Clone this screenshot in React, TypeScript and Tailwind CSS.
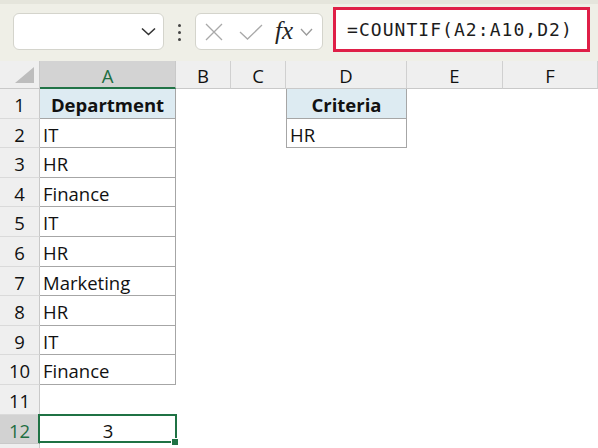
import React from "react";

const COLS = "grid grid-cols-[40px_136px_55px_55px_121px_96px_1fr]";
const FONT = { fontFamily: '"Open Sans", "Noto Sans", sans-serif' };

const aVals = ["Department", "IT", "HR", "Finance", "IT", "HR", "Marketing", "HR", "IT", "Finance"];
const dVals: Record<number, string> = { 0: "Criteria", 1: "HR" };

function rowTall(i: number) {
  const h = Math.round(89 + 29.6 * (i + 1)) - Math.round(89 + 29.6 * i);
  return h >= 30;
}

function RowHeader({ n, selected }: { n: number; selected?: boolean }) {
  return (
    <div
      className={`flex items-center justify-center border-r border-b ${
        selected ? "bg-[#d2d2d2] text-[#1e6e42] border-r-[#1f7244] border-b-[#c9c9c9]" : "bg-[#efefef] text-[#111] border-r-[#c9c9c9] border-b-[#dadada]"
      }`}
    >
      <span className="pt-[3px]">{n}</span>
    </div>
  );
}

export default function App() {
  return (
    <div className="w-[598px] h-[448px] overflow-hidden bg-white text-[18.5px] leading-[22px]" style={FONT}>
      {/* toolbar */}
      <div className="h-[61px] bg-[#efefe7] flex flex-col">
        <div className="h-[4px] bg-[#e5e5dc]" />
        <div className="flex items-start pl-[13px]">
          <div className="mt-[9px] w-[151px] h-[37px] bg-white border border-[#d4d4cc] rounded-[6px] flex items-center justify-end pr-[7px]">
            <svg width="15" height="9" viewBox="0 0 15 9">
              <path d="M1 1.5 L7.5 7.5 L14 1.5" fill="none" stroke="#333" strokeWidth="1.6" />
            </svg>
          </div>
          <div className="mt-[20px] w-[31px] flex flex-col items-center gap-[4px]">
            <div className="w-[3px] h-[3px] bg-[#444] rounded-full" />
            <div className="w-[3px] h-[3px] bg-[#444] rounded-full" />
            <div className="w-[3px] h-[3px] bg-[#444] rounded-full" />
          </div>
          <div className="mt-[9px] w-[128px] h-[37px] bg-white border border-[#d4d4cc] rounded-[6px] flex items-center pl-[9px]">
            <svg width="18" height="18" viewBox="0 0 18 18">
              <path d="M1 1 L17 17 M17 1 L1 17" stroke="#a9a9a9" strokeWidth="1.3" fill="none" />
            </svg>
            <svg width="24" height="16" viewBox="0 0 24 16" className="ml-[16px]">
              <path d="M1 8 L8.5 15 L23 1" stroke="#a9a9a9" strokeWidth="1.3" fill="none" />
            </svg>
            <span
              className="ml-[12px] italic text-[25px] leading-none text-[#222] -mt-[3px]"
              style={{ fontFamily: '"Liberation Serif", "DejaVu Serif", serif' }}
            >
              fx
            </span>
            <svg width="13" height="8" viewBox="0 0 13 8" className="ml-[7px]">
              <path d="M1 1 L6.5 7 L12 1" fill="none" stroke="#9a9a9a" strokeWidth="1.3" />
            </svg>
          </div>
          <div className="ml-[10px] mt-[3px] w-[257px] h-[45px] bg-white border-[3px] border-[#df1f47] flex items-center pl-[11px]">
            <span
              className="text-[18px] tracking-[1.05px] text-[#1c1c1c] pt-[1px]"
              style={{ fontFamily: '"DejaVu Sans Mono", "Liberation Mono", monospace' }}
            >
              =COUNTIF(A2:A10,D2)
            </span>
          </div>
        </div>
      </div>

      {/* column header */}
      <div className={`${COLS} h-[28px]`}>
        <div className="bg-[#efefef] border-r border-b border-[#c9c9c9] flex items-end justify-end pr-[5px] pb-[5px]">
          <svg width="19" height="16" viewBox="0 0 19 16">
            <path d="M19 0 L19 16 L0 16 Z" fill="#bdbdbd" />
          </svg>
        </div>
        <div className="bg-[#d3d3d3] text-[#1e6e42] border-r border-r-[#c9c9c9] border-b-2 border-b-[#217346] flex items-center justify-center">
          <span className="pt-[3px]">A</span>
        </div>
        {["B", "C", "D", "E", "F"].map((c) => (
          <div
            key={c}
            className="bg-[#efefef] text-[#111] border-r border-r-[#d0d0d0] border-b border-b-[#c9c9c9] flex items-center justify-center"
          >
            <span className="pt-[3px]">{c}</span>
          </div>
        ))}
      </div>

      {/* rows */}
      {Array.from({ length: 12 }).map((_, i) => {
        const n = i + 1;
        const isTable = i < 10;
        const a = isTable ? aVals[i] : undefined;
        const d = dVals[i];
        const isHead = i === 0;
        const sel = n === 12;
        return (
          <div key={n} className={`${COLS} ${rowTall(i) ? "h-[30px]" : "h-[29px]"}`}>
            <RowHeader n={n} selected={sel} />
            {sel ? (
              <div className="relative flex items-center justify-center text-[#111]">
                <span className="pt-[3px]">3</span>
                <div className="absolute -left-[2px] -top-[1px] -right-[1px] bottom-[1px] border-2 border-[#1f7244]" />
                <div className="absolute -right-[3px] bottom-[-2px] w-[8px] h-[8px] bg-[#1f7244] border border-white" />
              </div>
            ) : isTable ? (
              <div
                className={`flex items-center border-r border-b border-[#a6a6a6] text-[#111] ${
                  isHead ? "bg-[#ddebf2] justify-center font-bold" : "bg-white pl-[3px]"
                }`}
              >
                <span className="pt-[3px]">{a}</span>
              </div>
            ) : (
              <div />
            )}
            <div />
            <div />
            {d !== undefined ? (
              <div
                className={`flex items-center border-l border-r border-b border-[#a6a6a6] text-[#111] ${
                  isHead ? "bg-[#ddebf2] justify-center font-bold" : "bg-white pl-[3px]"
                }`}
              >
                <span className="pt-[3px]">{d}</span>
              </div>
            ) : (
              <div />
            )}
            <div />
            <div />
          </div>
        );
      })}
      <div className={`${COLS} h-[10px]`}>
        <div className="bg-[#efefef] border-r border-[#c9c9c9]" />
      </div>
    </div>
  );
}
